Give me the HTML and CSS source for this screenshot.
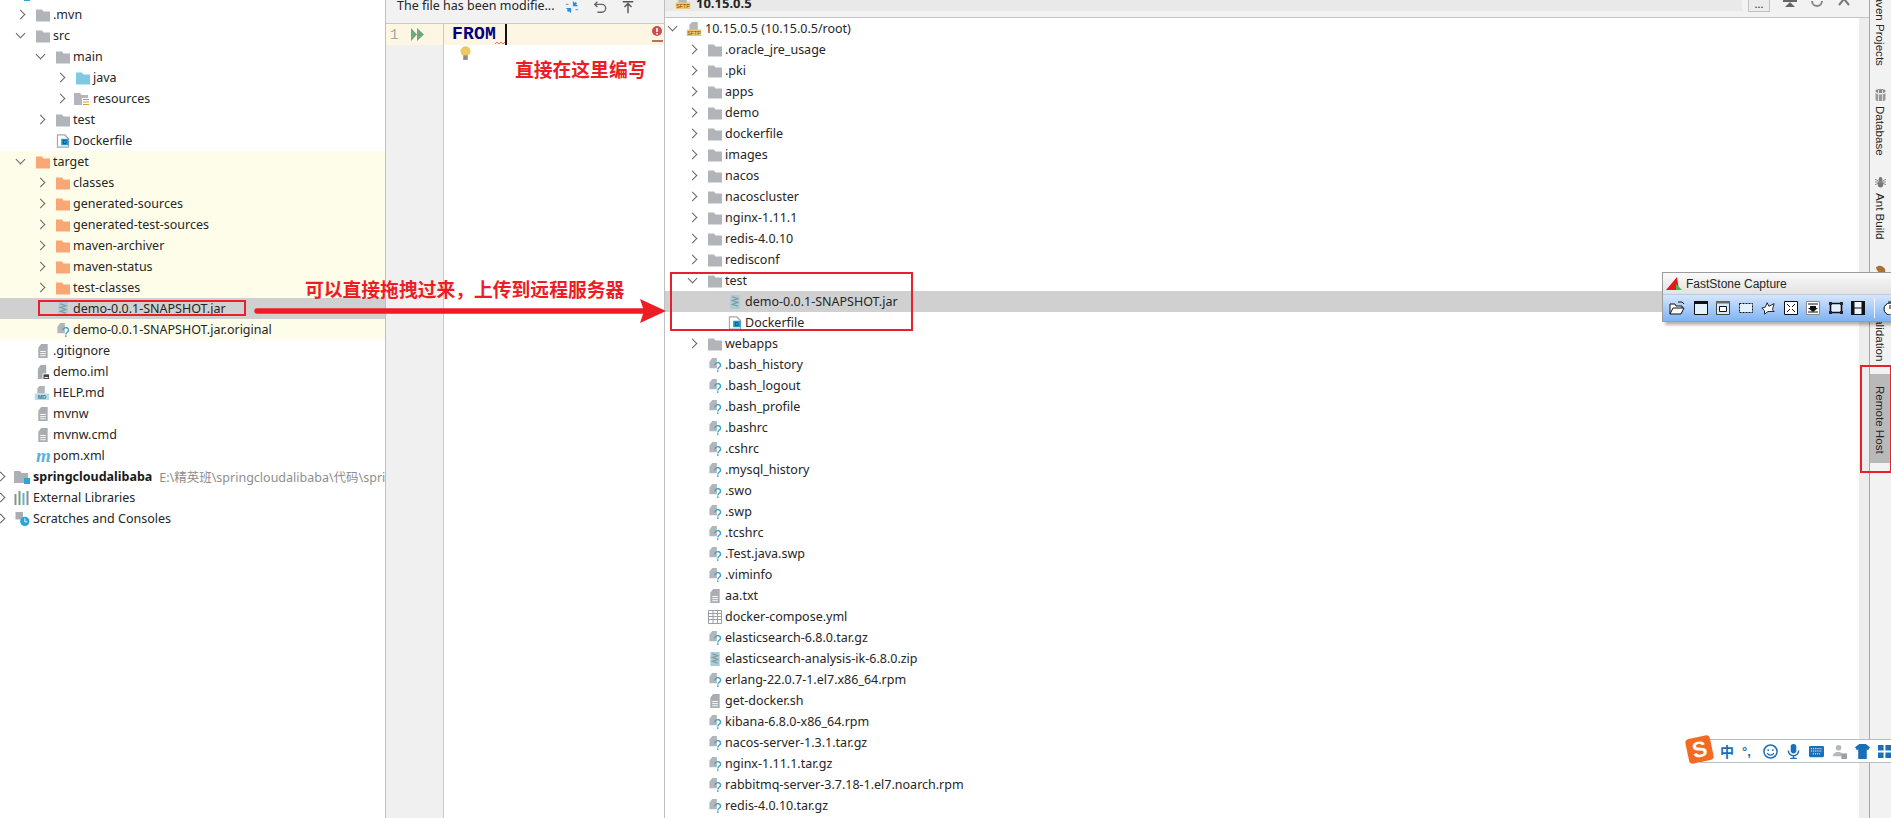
FILE: index.html
```html
<!DOCTYPE html>
<html lang="en">
<head>
    <meta charset="UTF-8">
    <title>Remote Host</title>
    <link rel="stylesheet" href="styles.css">
</head>
<body>
    <svg class="defs" width="0" height="0">
        <symbol id="folder" viewBox="0 0 14 13"><path d="M0 1h6l1.5 2H14v10H0z"/></symbol>
        <symbol id="resfolder" viewBox="0 0 16 14"><path d="M0 1h6l1.5 2H14v10H0z" fill="#b3b7bc"/><path d="M8 6h8v8H8z" fill="#fff"/><path d="M9 7.5h6M9 10h6M9 12.5h6" stroke="#c9a23c" stroke-width="1.2"/></symbol>
        <symbol id="module" viewBox="0 0 16 14"><path d="M0 1h6l1.5 2H14v10H0z" fill="#aab0b6"/><path d="M10 8h6v6h-6z" fill="#2aa5dc"/></symbol>
        <symbol id="docker" viewBox="0 0 14 15"><path d="M1 1h8l4 4v9H1z" fill="#fff" stroke="#a3a8ad" stroke-width="1.4"/><path d="M5 5h8v7H5z" fill="#1d9ed3"/></symbol>
        <symbol id="jar" viewBox="0 0 12 15"><path d="M1 0h10v15H1z" fill="#a9cdd6"/><path d="M3 2l6 2-6 2 6 2-6 2 6 2" fill="none" stroke="#8c98a0" stroke-width="1.3"/></symbol>
        <symbol id="unknown" viewBox="0 0 14 15"><path d="M4 0h5v11H1V4z" fill="#b2b6ba"/><path d="M7 8a3 2.6 0 115 1.5c-1 1-2 1.2-2 2.8M10 13.2v1.8" fill="none" stroke="#3aa5c8" stroke-width="1.5"/></symbol>
        <symbol id="plain" viewBox="0 0 12 15"><path d="M4 0h7v15H1V4z" fill="#a9adb1"/><path d="M3 8h6M3 10.3h6M3 12.6h6" stroke="#fff" stroke-width="1"/></symbol>
        <symbol id="iml" viewBox="0 0 13 15"><path d="M4 0h6v15H1V4z" fill="#a9adb1"/><path d="M6 9h7v6H6z" fill="#fff"/><path d="M7 10h6v5H7z" fill="#444"/><path d="M8 13h4v1H8z" fill="#fff"/></symbol>
        <symbol id="md" viewBox="0 0 16 15"><path d="M5 0h6v8H3V3z" fill="#b0b4b8"/><path d="M0 8h16v7H0z" fill="#b9dcea"/></symbol>
        <symbol id="sftp" viewBox="0 0 16 15"><path d="M6 0h6v9H3V3z" fill="#b3b7bb"/><path d="M0 8h16v7H0z" fill="#f2c66d"/></symbol>
        <symbol id="table" viewBox="0 0 14 14"><path d="M.5.5h13v13H.5z" fill="#fff" stroke="#9aa0a6"/><path d="M.5 3.5h13M.5 6.5h13M.5 9.5h13M5 .5v13M9.5.5v13" stroke="#9aa0a6" fill="none"/></symbol>
        <symbol id="libs" viewBox="0 0 15 14"><path d="M0 3h2v11H0z" fill="#8a8f94"/><path d="M4 0h2v14H4z" fill="#6fa56a"/><path d="M8 2h2v12H8z" fill="#5eb4d6"/><path d="M12 0h2v14h-2z" fill="#8a8f94"/></symbol>
        <symbol id="scratch" viewBox="0 0 16 15"><path d="M1 0h8v8H1z" fill="#a9adb1"/><circle cx="11" cy="10" r="5" fill="#2aa5dc"/><path d="M11 7v3.5h2.5" stroke="#fff" fill="none"/></symbol>
    </svg>

    <div class="ide">
        <div class="project">
            <div class="row root cliprow"><i class="chev"></i><svg class="ico w16"><use href="#module"/></svg></div>
            <div class="row l0"><i class="chev r"></i><svg class="ico gray"><use href="#folder"/></svg><span>.mvn</span></div>
            <div class="row l0"><i class="chev d"></i><svg class="ico gray"><use href="#folder"/></svg><span>src</span></div>
            <div class="row l1"><i class="chev d"></i><svg class="ico gray"><use href="#folder"/></svg><span>main</span></div>
            <div class="row l2"><i class="chev r"></i><svg class="ico blue"><use href="#folder"/></svg><span>java</span></div>
            <div class="row l2"><i class="chev r"></i><svg class="ico w16"><use href="#resfolder"/></svg><span>resources</span></div>
            <div class="row l1"><i class="chev r"></i><svg class="ico gray"><use href="#folder"/></svg><span>test</span></div>
            <div class="row l1"><i class="chev"></i><svg class="ico" viewBox="0 0 14 15"><use href="#docker"/><text x="9" y="11" class="icotext" font-size="6" fill="#123">D</text></svg><span>Dockerfile</span></div>
            <div class="excluded">
                <div class="row l0"><i class="chev d"></i><svg class="ico orange"><use href="#folder"/></svg><span>target</span></div>
                <div class="row l1"><i class="chev r"></i><svg class="ico orange"><use href="#folder"/></svg><span>classes</span></div>
                <div class="row l1"><i class="chev r"></i><svg class="ico orange"><use href="#folder"/></svg><span>generated-sources</span></div>
                <div class="row l1"><i class="chev r"></i><svg class="ico orange"><use href="#folder"/></svg><span>generated-test-sources</span></div>
                <div class="row l1"><i class="chev r"></i><svg class="ico orange"><use href="#folder"/></svg><span>maven-archiver</span></div>
                <div class="row l1"><i class="chev r"></i><svg class="ico orange"><use href="#folder"/></svg><span>maven-status</span></div>
                <div class="row l1"><i class="chev r"></i><svg class="ico orange"><use href="#folder"/></svg><span>test-classes</span></div>
                <div class="row l1 selected"><i class="chev"></i><svg class="ico"><use href="#jar"/></svg><span>demo-0.0.1-SNAPSHOT.jar</span></div>
                <div class="row l1"><i class="chev"></i><svg class="ico"><use href="#unknown"/></svg><span>demo-0.0.1-SNAPSHOT.jar.original</span></div>
            </div>
            <div class="row l0"><i class="chev"></i><svg class="ico"><use href="#plain"/></svg><span>.gitignore</span></div>
            <div class="row l0"><i class="chev"></i><svg class="ico"><use href="#iml"/></svg><span>demo.iml</span></div>
            <div class="row l0"><i class="chev"></i><svg class="ico w16" viewBox="0 0 16 15"><use href="#md"/><text x="8" y="14" class="icotext" font-size="6" font-weight="700" fill="#2a7d9d">MD</text></svg><span>HELP.md</span></div>
            <div class="row l0"><i class="chev"></i><svg class="ico"><use href="#plain"/></svg><span>mvnw</span></div>
            <div class="row l0"><i class="chev"></i><svg class="ico"><use href="#plain"/></svg><span>mvnw.cmd</span></div>
            <div class="row l0"><i class="chev"></i><span class="mvnlogo">m</span><span>pom.xml</span></div>
            <div class="row root"><i class="chev r"></i><svg class="ico w16"><use href="#module"/></svg><span class="strong">springcloudalibaba</span><span class="path">E:\精英班\springcloudalibaba\代码\springcloudalibaba</span></div>
            <div class="row root"><i class="chev r"></i><svg class="ico w16"><use href="#libs"/></svg><span>External Libraries</span></div>
            <div class="row root"><i class="chev r"></i><svg class="ico w16"><use href="#scratch"/></svg><span>Scratches and Consoles</span></div>
        </div>

        <div class="editor">
            <div class="edit-bar">
                <span class="notice">The file has been modifie...</span>
                <svg class="bar-ico" viewBox="0 0 16 16"><path d="M9 7V1l6 6zM7 9v6L1 9z" fill="#2d8fd5"/><path d="M13 3l-2 2M3 13l2-2" stroke="#2d8fd5" stroke-width="2"/><path d="M1 5h3M12 11h3" stroke="#6aa9d8" stroke-width="1.5"/></svg>
                <svg class="bar-ico" viewBox="0 0 16 16"><path d="M5 2L2 5l3 3M2 5h8a4 4 0 010 9H5" stroke="#666" stroke-width="1.6" fill="none"/></svg>
                <svg class="bar-ico" viewBox="0 0 16 16"><path d="M2 2h12M8 15V5M4 8l4-4 4 4" stroke="#555" stroke-width="1.6" fill="none"/></svg>
            </div>
            <div class="code">
                <div class="gutter">
                    <div class="line-no">
                        <span>1</span>
                        <svg class="run" viewBox="0 0 13 13"><path d="M0 0l6 6.5L0 13zM6 0l7 6.5L6 13z" fill="#6fa87a"/></svg>
                    </div>
                </div>
                <div class="source">
                    <div class="cur-line">
                        <span class="kw">FROM</span><i class="caret"></i>
                        <svg class="squiggle" viewBox="0 0 10 3"><path d="M0 2l2-2 2 2 2-2 2 2 2-2" stroke="#e05050" fill="none" stroke-width=".8"/></svg>
                        <div class="err-mark"><svg viewBox="0 0 10 10"><circle cx="5" cy="5" r="5" fill="#c95050"/><path d="M4.2 2h1.6v4H4.2zM4.2 7h1.6v1.5H4.2z" fill="#fff"/></svg></div>
                    </div>
                    <svg class="bulb" viewBox="0 0 12 16"><circle cx="6" cy="5.5" r="5.5" fill="#f0c860"/><path d="M3.5 10h5v5h-5z" fill="#8d8d8d"/></svg>
                </div>
            </div>
        </div>

        <div class="remote">
            <div class="rem-bar">
                <div class="conn">
                    <svg class="ico w16" viewBox="0 0 16 15"><use href="#sftp"/><text x="8" y="14" class="icotext" font-size="5.6" fill="#6b4a10">SFTP</text></svg>
                    <b>10.15.0.5</b>
                </div>
                <div class="more">...</div>
                <svg class="hd-ico" viewBox="0 0 14 14"><path d="M0 6h14v3H0zM7 9l5 5H2z" fill="#666"/></svg>
                <svg class="hd-ico" viewBox="0 0 14 14"><path d="M12 8a5 5 0 01-10 0" stroke="#888" stroke-width="2" fill="none"/></svg>
                <svg class="hd-ico" viewBox="0 0 14 14"><path d="M2 0l10 12M12 0L2 12" stroke="#777" stroke-width="2"/></svg>
            </div>
            <div class="rem-body">
                <div class="rem-tree">
                    <div class="row root"><i class="chev d"></i><svg class="ico w16" viewBox="0 0 16 15"><use href="#sftp"/><text x="8" y="14" class="icotext" font-size="5.6" fill="#6b4a10">SFTP</text></svg><span>10.15.0.5 (10.15.0.5/root)</span></div>
                    <div class="row l0"><i class="chev r"></i><svg class="ico gray"><use href="#folder"/></svg><span>.oracle_jre_usage</span></div>
                    <div class="row l0"><i class="chev r"></i><svg class="ico gray"><use href="#folder"/></svg><span>.pki</span></div>
                    <div class="row l0"><i class="chev r"></i><svg class="ico gray"><use href="#folder"/></svg><span>apps</span></div>
                    <div class="row l0"><i class="chev r"></i><svg class="ico gray"><use href="#folder"/></svg><span>demo</span></div>
                    <div class="row l0"><i class="chev r"></i><svg class="ico gray"><use href="#folder"/></svg><span>dockerfile</span></div>
                    <div class="row l0"><i class="chev r"></i><svg class="ico gray"><use href="#folder"/></svg><span>images</span></div>
                    <div class="row l0"><i class="chev r"></i><svg class="ico gray"><use href="#folder"/></svg><span>nacos</span></div>
                    <div class="row l0"><i class="chev r"></i><svg class="ico gray"><use href="#folder"/></svg><span>nacoscluster</span></div>
                    <div class="row l0"><i class="chev r"></i><svg class="ico gray"><use href="#folder"/></svg><span>nginx-1.11.1</span></div>
                    <div class="row l0"><i class="chev r"></i><svg class="ico gray"><use href="#folder"/></svg><span>redis-4.0.10</span></div>
                    <div class="row l0"><i class="chev r"></i><svg class="ico gray"><use href="#folder"/></svg><span>redisconf</span></div>
                    <div class="row l0"><i class="chev d"></i><svg class="ico gray"><use href="#folder"/></svg><span>test</span></div>
                    <div class="row l1 selected"><i class="chev"></i><svg class="ico"><use href="#jar"/></svg><span>demo-0.0.1-SNAPSHOT.jar</span></div>
                    <div class="row l1"><i class="chev"></i><svg class="ico" viewBox="0 0 14 15"><use href="#docker"/><text x="9" y="11" class="icotext" font-size="6" fill="#123">D</text></svg><span>Dockerfile</span></div>
                    <div class="row l0"><i class="chev r"></i><svg class="ico gray"><use href="#folder"/></svg><span>webapps</span></div>
                    <div class="row l0"><i class="chev"></i><svg class="ico"><use href="#unknown"/></svg><span>.bash_history</span></div>
                    <div class="row l0"><i class="chev"></i><svg class="ico"><use href="#unknown"/></svg><span>.bash_logout</span></div>
                    <div class="row l0"><i class="chev"></i><svg class="ico"><use href="#unknown"/></svg><span>.bash_profile</span></div>
                    <div class="row l0"><i class="chev"></i><svg class="ico"><use href="#unknown"/></svg><span>.bashrc</span></div>
                    <div class="row l0"><i class="chev"></i><svg class="ico"><use href="#unknown"/></svg><span>.cshrc</span></div>
                    <div class="row l0"><i class="chev"></i><svg class="ico"><use href="#unknown"/></svg><span>.mysql_history</span></div>
                    <div class="row l0"><i class="chev"></i><svg class="ico"><use href="#unknown"/></svg><span>.swo</span></div>
                    <div class="row l0"><i class="chev"></i><svg class="ico"><use href="#unknown"/></svg><span>.swp</span></div>
                    <div class="row l0"><i class="chev"></i><svg class="ico"><use href="#unknown"/></svg><span>.tcshrc</span></div>
                    <div class="row l0"><i class="chev"></i><svg class="ico"><use href="#unknown"/></svg><span>.Test.java.swp</span></div>
                    <div class="row l0"><i class="chev"></i><svg class="ico"><use href="#unknown"/></svg><span>.viminfo</span></div>
                    <div class="row l0"><i class="chev"></i><svg class="ico"><use href="#plain"/></svg><span>aa.txt</span></div>
                    <div class="row l0"><i class="chev"></i><svg class="ico"><use href="#table"/></svg><span>docker-compose.yml</span></div>
                    <div class="row l0"><i class="chev"></i><svg class="ico"><use href="#unknown"/></svg><span>elasticsearch-6.8.0.tar.gz</span></div>
                    <div class="row l0"><i class="chev"></i><svg class="ico"><use href="#jar"/></svg><span>elasticsearch-analysis-ik-6.8.0.zip</span></div>
                    <div class="row l0"><i class="chev"></i><svg class="ico"><use href="#unknown"/></svg><span>erlang-22.0.7-1.el7.x86_64.rpm</span></div>
                    <div class="row l0"><i class="chev"></i><svg class="ico"><use href="#plain"/></svg><span>get-docker.sh</span></div>
                    <div class="row l0"><i class="chev"></i><svg class="ico"><use href="#unknown"/></svg><span>kibana-6.8.0-x86_64.rpm</span></div>
                    <div class="row l0"><i class="chev"></i><svg class="ico"><use href="#unknown"/></svg><span>nacos-server-1.3.1.tar.gz</span></div>
                    <div class="row l0"><i class="chev"></i><svg class="ico"><use href="#unknown"/></svg><span>nginx-1.11.1.tar.gz</span></div>
                    <div class="row l0"><i class="chev"></i><svg class="ico"><use href="#unknown"/></svg><span>rabbitmq-server-3.7.18-1.el7.noarch.rpm</span></div>
                    <div class="row l0"><i class="chev"></i><svg class="ico"><use href="#unknown"/></svg><span>redis-4.0.10.tar.gz</span></div>
                </div>
                <div class="scroll-track"></div>
            </div>
        </div>

        <div class="tools">
            <div class="tool maven"><span>Maven Projects</span></div>
            <div class="tool db">
                <svg viewBox="0 0 11 12"><ellipse cx="5.5" cy="2" rx="5" ry="2" fill="#888"/><path d="M.5 3.5v7c0 1 2 2 5 2s5-1 5-2v-7c0 1-2 2-5 2s-5-1-5-2z" fill="#999"/><path d="M3.5 1v11M7.5 1v11" stroke="#ddd"/></svg>
                <span>Database</span>
            </div>
            <div class="tool ant">
                <svg viewBox="0 0 12 12"><ellipse cx="6" cy="3" rx="2" ry="2.5" fill="#777"/><ellipse cx="6" cy="8.5" rx="3" ry="3.5" fill="#777"/><path d="M0 3l12 6M12 3L0 9M0 6h12" stroke="#888"/></svg>
                <span>Ant Build</span>
            </div>
            <div class="tool bean">
                <svg viewBox="0 0 12 12"><path d="M1 3c3-3 8-2 10 2 1 3-1 6-3 6C5 9 2 8 1 3z" fill="#a8713a"/></svg>
                <span>Bean Validation</span>
            </div>
            <div class="tool remote-tab"><span>Remote Host</span></div>
        </div>
    </div>

    <!-- annotations on top of the screenshot -->
    <div class="mark box-left"></div>
    <div class="mark box-right"></div>
    <div class="mark box-tab"></div>
    <svg class="arrow" viewBox="0 0 412 24"><path d="M3 12H392" stroke="#ee1c25" stroke-width="5.5" stroke-linecap="round"/><path d="M386 0l26 12-26 12 4-12z" fill="#ee1c25"/></svg>
    <div class="note note-drag">可以直接拖拽过来，上传到远程服务器</div>
    <div class="note note-edit">直接在这里编写</div>

    <div class="capture">
        <div class="cap-title">
            <svg viewBox="0 0 17 14"><path d="M0 13L11 0l2 13z" fill="#e8161b"/><path d="M10 7l6 6h-6z" fill="#2cc24a"/></svg>
            <span>FastStone Capture</span>
        </div>
        <div class="cap-tools">
            <svg viewBox="0 0 16 14"><path d="M1 13V3h5l1 2h6v2" fill="#fff" stroke="#111"/><path d="M1 13l3-6h11l-3 6z" fill="#fff" stroke="#111"/><path d="M9 1h4l2 2" fill="none" stroke="#111"/></svg>
            <svg viewBox="0 0 14 14"><path d="M.5.5h13v13H.5z" fill="#e4f1ff" stroke="#111"/><path d="M0 0h14v3H0z" fill="#111"/></svg>
            <svg viewBox="0 0 14 14"><path d="M.5.5h13v13H.5z" fill="#dbe9fb" stroke="#444"/><path d="M0 0h14v2.5H0z" fill="#666"/><path d="M3.5 5.5h7v5h-7z" fill="#fff" stroke="#111"/></svg>
            <svg viewBox="0 0 14 14"><path d="M.5 2.5h13v9H.5z" fill="#e4f1ff" stroke="#111" stroke-dasharray="2 1"/></svg>
            <svg viewBox="0 0 16 14"><path d="M1 7l4-1 2-5 2 4 6-3-2 7 2 2-7 0-4 3 0-4z" fill="#fff" stroke="#111"/></svg>
            <svg viewBox="0 0 14 14"><path d="M.5.5h13v13H.5z" fill="#fff" stroke="#111"/><path d="M3 3l3 3M11 3L8 6M3 11l3-3M11 11L8 8" stroke="#111"/></svg>
            <svg viewBox="0 0 14 14"><path d="M.5.5h13v13H.5z" fill="#fff" stroke="#888"/><path d="M2 3h10M2 11h10" stroke="#111"/><path d="M4 5h6v2h2l-5 4-5-4h2z" fill="#111"/></svg>
            <svg viewBox="0 0 14 14"><path d="M1.5 2.5h11v9h-11z" fill="#e4f1ff" stroke="#111" stroke-width="1.6"/><path d="M0 1h3v3H0zM11 1h3v3h-3zM0 10h3v3H0zM11 10h3v3h-3z" fill="#223"/></svg>
            <svg viewBox="0 0 14 14"><path d="M3 .5h8v13H3z" fill="#eef5ff" stroke="#111"/><path d="M0 0h3v14H0zM11 0h3v14h-3z" fill="#111"/><path d="M3 7h8" stroke="#111"/></svg>
            <i class="cap-sep"></i>
            <svg viewBox="0 0 14 14"><circle cx="7" cy="8" r="6" fill="#fff" stroke="#111"/><path d="M7 8V4M5 1h4" stroke="#111"/></svg>
        </div>
    </div>

    <div class="ime">
        <div class="ime-logo">S</div>
        <span class="ime-zh">中</span>
        <span class="ime-dot">°,</span>
        <svg viewBox="0 0 16 16"><circle cx="8" cy="8" r="7" fill="none" stroke="#1a6fb8" stroke-width="1.6"/><circle cx="5.5" cy="6.5" r="1" fill="#1a6fb8"/><circle cx="10.5" cy="6.5" r="1" fill="#1a6fb8"/><path d="M4.5 9.5a3.8 3.8 0 007 0" stroke="#1a6fb8" fill="none" stroke-width="1.3"/></svg>
        <svg viewBox="0 0 14 16"><rect x="4" y="0" width="6" height="10" rx="3" fill="#1a6fb8"/><path d="M1.5 7a5.5 5.5 0 0011 0M7 12.5V15M3.5 15.5h7" stroke="#1a6fb8" stroke-width="1.5" fill="none"/></svg>
        <svg viewBox="0 0 16 12"><rect width="16" height="12" rx="1.5" fill="#1a6fb8"/><path d="M2 3h12M2 5.5h12M4 8.5h8" stroke="#fff" stroke-dasharray="1.3 1"/></svg>
        <svg viewBox="0 0 16 16"><circle cx="7" cy="4" r="3" fill="#b4b8bd"/><path d="M1 13c0-6 11-6 11 0z" fill="#b4b8bd"/><path d="M10 10h6v6h-6z" fill="#9aa0a6"/></svg>
        <svg viewBox="0 0 14 14"><path d="M4 0h6l4 3-2 3-1-1v9H3V5L2 6 0 3z" fill="#1a6fb8"/></svg>
        <svg class="ime-grid" viewBox="0 0 14 14"><path d="M0 0h6v6H0zM8 0h6v6H8zM0 8h6v6H0zM8 8h6v6H8z" fill="#1a6fb8"/></svg>
    </div>
</body>
</html>
```

FILE: styles.css
```css
* {
    box-sizing: border-box;
}

html, body {
    margin: 0;
    height: 100%;
    overflow: hidden;
    background: #fff;
}

body {
    font-family: "Noto Sans", "Noto Sans CJK SC", sans-serif;
    font-size: 12.5px;
    color: #262626;
}

.defs {
    position: absolute;
}

.icotext {
    font-family: "Liberation Sans", sans-serif;
    text-anchor: middle;
}

.ide {
    display: flex;
    width: 1891px;
    height: 818px;
    overflow: hidden;
}

/* tree rows, shared by both panels */
.row {
    display: flex;
    align-items: center;
    height: 21px;
    white-space: nowrap;
}

.row.root .chev { margin-left: -8px; }
.row.l0 { padding-left: 12px; }
.row.l1 { padding-left: 32px; }
.row.l2 { padding-left: 52px; }

.selected {
    background: #d0d0d0;
}

.chev {
    flex: none;
    display: flex;
    align-items: center;
    justify-content: center;
    width: 16px;
    height: 16px;
}

.chev.r::before,
.chev.d::before {
    content: "";
    width: 6px;
    height: 6px;
    border-top: 1.5px solid #666;
    border-right: 1.5px solid #666;
}

.chev.r::before { transform: rotate(45deg); }
.chev.d::before { transform: translateY(-2px) rotate(135deg); }

.ico {
    flex: none;
    width: 14px;
    height: 14px;
    margin: 0 3px 0 8px;
}

.ico.w16 {
    width: 16px;
    margin: 0 3px 0 6px;
}

.gray { fill: #b1b5ba; }
.blue { fill: #80c9e2; }
.orange { fill: #f9a774; }

.strong { font-weight: 700; color: #1a1a1a; }

.path {
    margin-left: 7px;
    color: #8e8e8e;
}

.row .mvnlogo {
    width: 14px;
    margin: 0 3px 0 8px;
    flex: none;
    color: #5bb3dd;
    font: italic 700 19px/16px "Liberation Serif", serif;
}

/* left: project tree */
.project {
    flex: none;
    width: 386px;
    overflow: hidden;
    border-right: 1px solid #bfbfbf;
}

.cliprow {
    margin-top: -17px;
}

.excluded {
    background: #fefdea;
}

/* middle: dockerfile editor */
.editor {
    flex: none;
    width: 278px;
    display: flex;
    flex-direction: column;
}

.edit-bar {
    flex: none;
    display: flex;
    height: 24px;
    padding-left: 11px;
    background: #f2f2f2;
    border-bottom: 1px solid #c9c9c9;
    overflow: hidden;
}

.notice {
    width: 154px;
    line-height: 11px;
    white-space: nowrap;
}

.bar-ico {
    width: 14px;
    height: 14px;
    margin-left: 14px;
}

.code {
    flex: 1;
    display: flex;
}

.gutter {
    flex: none;
    width: 58px;
    background: #f0f0f0;
    border-right: 1px solid #c9c9c9;
}

.line-no {
    display: flex;
    align-items: center;
    gap: 13px;
    height: 21px;
    padding-left: 4px;
    background: #fdf6e3;
    color: #a5a5a5;
    font: 14px "Liberation Mono", monospace;
}

.run {
    width: 13px;
    height: 13px;
}

.source {
    flex: 1;
    min-width: 0;
}

.cur-line {
    position: relative;
    display: flex;
    align-items: center;
    height: 21px;
    padding-left: 8px;
    background: #fdf6e3;
}

.kw {
    color: #000080;
    font: 700 18px/21px "Liberation Mono", monospace;
    letter-spacing: .2px;
}

.caret {
    width: 2px;
    height: 21px;
    margin-left: 9px;
    background: #111;
}

.squiggle {
    position: absolute;
    left: 51px;
    top: 18px;
    width: 10px;
    height: 3px;
}

.err-mark {
    position: absolute;
    right: 1px;
    top: 2px;
    width: 11px;
    height: 16px;
    border-bottom: 2px solid #b9715f;
}

.err-mark svg {
    display: block;
    width: 10px;
    height: 10px;
}

.bulb {
    display: block;
    width: 11px;
    height: 15px;
    margin: 1px 0 0 16px;
}

/* right: remote host panel */
.remote {
    flex: none;
    width: 1205px;
    display: flex;
    flex-direction: column;
    border-left: 1px solid #bfbfbf;
}

.rem-bar {
    flex: none;
    display: flex;
    align-items: flex-start;
    height: 18px;
    background: #f2f2f2;
    border-bottom: 1px solid #c4c4c4;
    overflow: hidden;
}

.conn {
    flex: none;
    display: flex;
    align-items: flex-start;
    width: 1077px;
    height: 11px;
    padding-left: 4px;
    background: #e9e9e9;
    font-size: 13px;
}

.conn .ico {
    margin: -5px 5px 0 6px;
}

.conn b {
    margin-top: -6px;
    line-height: 18px;
}

.more {
    flex: none;
    width: 22px;
    height: 12px;
    margin-left: 6px;
    border: 1px solid #c0c0c0;
    border-top: 0;
    line-height: 8px;
    text-align: center;
    font-size: 11px;
    background: #ececec;
}

.hd-ico {
    flex: none;
    width: 14px;
    height: 14px;
    margin: -7px 0 0 13px;
}

.rem-body {
    flex: 1;
    min-height: 0;
    display: flex;
}

.rem-tree {
    flex: 1;
    padding-left: 7px;
    overflow: hidden;
}

.rem-tree .row.selected {
    margin-left: -7px;
    padding-left: 39px;
}

.scroll-track {
    flex: none;
    width: 10px;
    background: #ededed;
}

/* far right: tool window strip */
.tools {
    flex: none;
    width: 22px;
    display: flex;
    flex-direction: column;
    align-items: center;
    background: #f2f2f2;
    border-left: 1px solid #a8a8a8;
    overflow: hidden;
}

.tool {
    flex: none;
    display: flex;
    flex-direction: column;
    align-items: center;
    width: 100%;
    font: 11.6px "Liberation Sans", sans-serif;
}

.tool span {
    writing-mode: vertical-rl;
    line-height: 21px;
    white-space: nowrap;
}

.tool svg {
    flex: none;
    width: 11px;
    height: 12px;
    margin-bottom: 5px;
}

.maven { height: 66px; justify-content: flex-end; }
.db { margin-top: 23px; height: 66px; }
.ant { margin-top: 21px; height: 64px; }
.bean { margin-top: 24px; height: 98px; }

.remote-tab {
    margin-top: 12px;
    height: 89px;
    padding-top: 12px;
    background: #b9b9b9;
}

/* red marks drawn on the screenshot */
.mark {
    position: absolute;
    border: 2px solid #e8202c;
}

.box-left { left: 38px; top: 300px; width: 208px; height: 16px; }
.box-right { left: 670px; top: 272px; width: 243px; height: 59px; }
.box-tab { left: 1860px; top: 365px; width: 32px; height: 108px; }

.arrow {
    position: absolute;
    left: 254px;
    top: 299px;
    width: 412px;
    height: 24px;
}

.note {
    position: absolute;
    color: #ee1c25;
    font: 700 18.8px/24px "Noto Sans CJK SC", sans-serif;
    white-space: nowrap;
}

.note-drag { left: 305px; top: 277px; }
.note-edit { left: 515px; top: 57px; }

/* floating FastStone toolbar */
.capture {
    position: absolute;
    left: 1662px;
    top: 272px;
    width: 240px;
    height: 50px;
    border: 1px solid #9c9c9c;
    box-shadow: 3px 3px 3px rgba(0, 0, 0, .3);
}

.cap-title {
    display: flex;
    align-items: center;
    gap: 3px;
    height: 22px;
    padding-left: 3px;
    background: linear-gradient(#fafafa, #e2e2e2);
    font: 12px "Liberation Sans", sans-serif;
    border-bottom: 1px solid #b9cbe4;
}

.cap-title svg {
    width: 17px;
    height: 14px;
}

.cap-tools {
    display: flex;
    align-items: center;
    gap: 8.5px;
    height: 26px;
    padding-left: 6px;
    background: linear-gradient(#d5e6fc, #7fb3f3);
}

.cap-tools svg {
    flex: none;
    width: 14px;
    height: 14px;
}

.cap-tools svg:first-child {
    width: 16px;
}

.cap-sep {
    flex: none;
    width: 1px;
    height: 20px;
    background: #eef5ff;
}

/* sogou ime bar */
.ime {
    position: absolute;
    left: 1700px;
    top: 739px;
    width: 191px;
    height: 24px;
    display: flex;
    align-items: center;
    gap: 8px;
    padding-left: 19px;
    background: #fff;
    border: 1px solid #b8bcc5;
    border-right: 0;
}

.ime svg {
    flex: none;
    width: 15px;
    height: 15px;
}

.ime svg.ime-grid {
    width: 13px;
    height: 13px;
}

.ime-logo {
    position: absolute;
    left: -14px;
    top: -3px;
    width: 25px;
    height: 25px;
    border-radius: 4px;
    transform: rotate(-12deg);
    background: #f46a22;
    color: #fff;
    font: 700 22px/25px "Liberation Sans", sans-serif;
    text-align: center;
}

.ime-zh {
    color: #1a6fb8;
    font: 700 14px "Noto Sans CJK SC", sans-serif;
}

.ime-dot {
    width: 14px;
    color: #1a6fb8;
    font: 700 13px "Liberation Sans", sans-serif;
}
```
